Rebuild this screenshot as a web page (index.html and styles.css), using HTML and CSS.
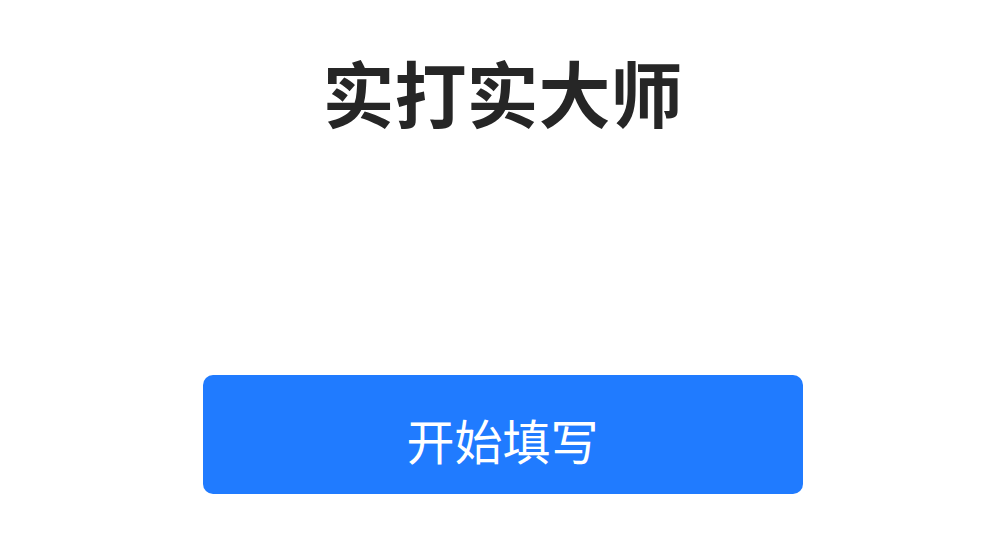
FILE: index.html
```html
<!DOCTYPE html>
<html lang="zh-CN">
<head>
<meta charset="utf-8">
<link rel="stylesheet" href="styles.css">
</head>
<body>
<div class="page">
  <h1 class="title">实打实大师</h1>
  <button class="start-btn">开始填写</button>
</div>
</body>
</html>
```
FILE: styles.css
```css
html, body {
  margin: 0;
  padding: 0;
  background: #ffffff;
}
.page {
  width: 1005px;
  height: 543px;
  display: flex;
  flex-direction: column;
  align-items: center;
  font-family: "Noto Sans CJK SC", "Noto Sans", sans-serif;
}
.title {
  margin: 55px 0 0 0;
  font-size: 72px;
  line-height: 72px;
  font-weight: 700;
  color: #262626;
}
.start-btn {
  margin-top: 248px;
  width: 600px;
  height: 119px;
  border: none;
  border-radius: 10px;
  background: #207bff;
  color: #ffffff;
  font-family: "Noto Sans CJK SC", "Noto Sans", sans-serif;
  font-size: 48px;
  line-height: 48px;
  font-weight: 400;
  padding: 8px 0 0 0;
}
```
